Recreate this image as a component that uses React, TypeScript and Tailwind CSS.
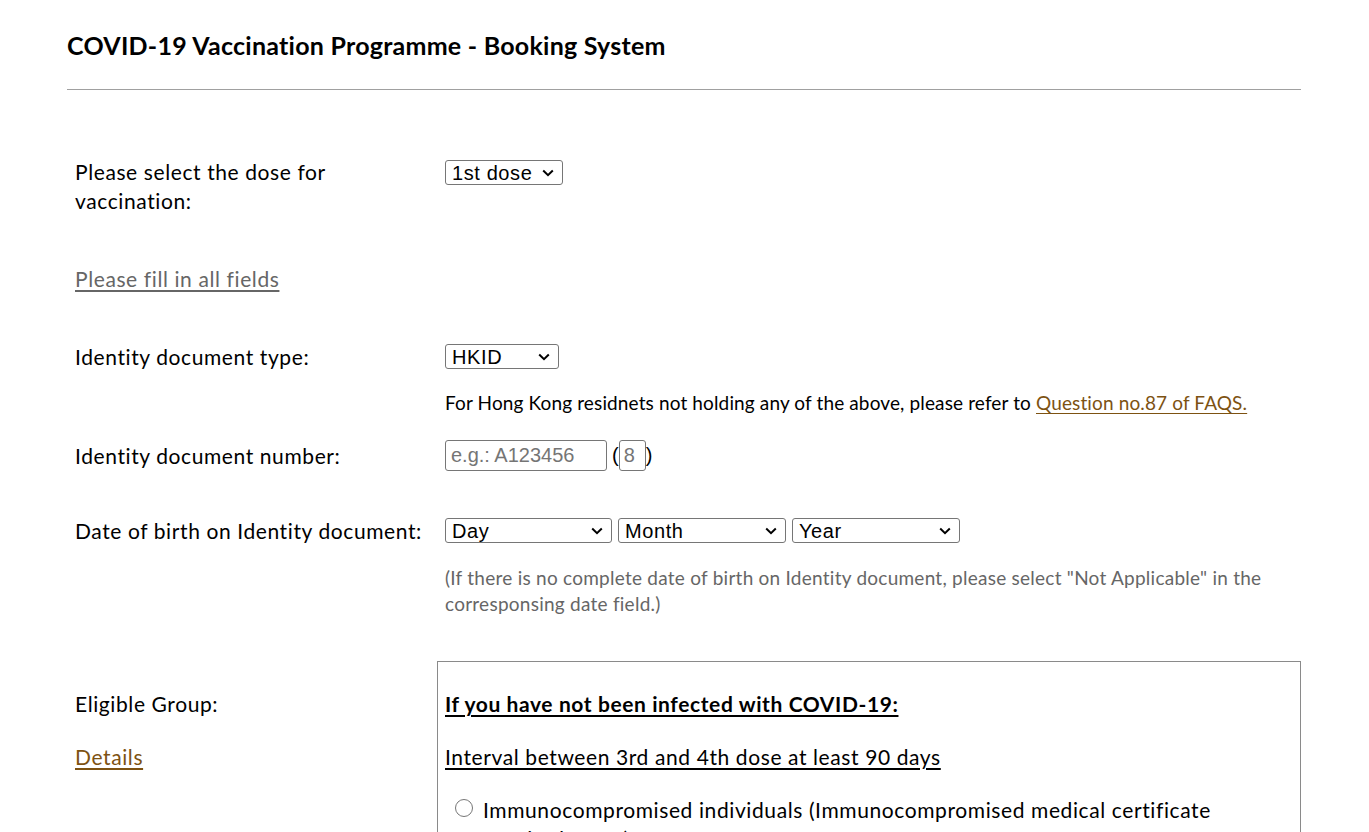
import React from "react";

const font = { fontFamily: '"Lato", "Noto Sans", sans-serif' };
const arial = { fontFamily: '"Liberation Sans", Arial, sans-serif' };

function Chevron() {
  return (
    <svg
      className="pointer-events-none absolute right-[9px] top-[9px]"
      width="12"
      height="8"
      viewBox="0 0 12 8"
      fill="none"
    >
      <path d="M1.2 1.5l4.8 4.6 4.8-4.6" stroke="#000" strokeWidth="2" />
    </svg>
  );
}

function Select({ value, width }: { value: string; width: string }) {
  return (
    <div className={`relative block h-[25px] shrink-0 ${width}`}>
      <select
        defaultValue={value}
        className="block h-[25px] w-full appearance-none rounded-[3px] border border-[#767676] bg-white pl-[6px] pr-6 pt-[1px] text-[20px] leading-[22px] text-black outline-none"
        style={arial}
      >
        <option>{value}</option>
      </select>
      <Chevron />
    </div>
  );
}

export default function App() {
  return (
    <div className="min-h-screen bg-white text-black" style={font}>
      <div className="mx-[67px] w-[1234px]">
        <h1 className="pt-[30px] text-[25px] font-bold leading-[30px] tracking-[0.25px]">
          COVID-19 Vaccination Programme - Booking System
        </h1>
        <div className="mt-[29px] h-px bg-[#a0a0a0]" />

        <div className="text-[21px] leading-[29px] tracking-[0.6px]">
          {/* Dose */}
          <div className="mt-[67px] grid grid-cols-[370px_1fr]">
            <div className="px-2">Please select the dose for vaccination:</div>
            <div className="flex items-start px-2 pt-[3px]">
              <Select value="1st dose" width="w-[118px]" />
            </div>
          </div>

          {/* Fill in all fields */}
          <div className="mt-[49px] px-2">
            <a href="#" className="text-[#666666] underline underline-offset-[3px]">
              Please fill in all fields
            </a>
          </div>

          {/* ID type */}
          <div className="mt-[49px] grid grid-cols-[370px_1fr]">
            <div className="px-2">Identity document type:</div>
            <div className="px-2 pt-[2px]">
              <Select value="HKID" width="w-[114px]" />
              <p className="mt-[21px] text-[19px] leading-[26px] tracking-[0.13px]">
                For Hong Kong residnets not holding any of the above, please refer to{" "}
                <a href="#" className="text-[#7d5212] underline underline-offset-[3px]">
                  Question no.87 of FAQS.
                </a>
              </p>
            </div>
          </div>

          {/* ID number */}
          <div className="mt-[24px] grid grid-cols-[370px_1fr]">
            <div className="px-2 pt-px">Identity document number:</div>
            <div className="flex items-center px-2 text-[20px] tracking-normal" style={arial}>
              <input
                placeholder="e.g.: A123456"
                className="h-[31px] w-[162px] rounded-[3px] border border-[#767676] px-[5px] text-[20px] placeholder:text-[#757575] outline-none"
              />
              <span className="ml-[5px]">(</span>
              <input
                placeholder="8"
                className="h-[31px] w-[27px] rounded-[3px] border border-[#767676] px-[4px] text-[20px] placeholder:text-[#757575] outline-none"
              />
              <span>)</span>
            </div>
          </div>

          {/* DOB */}
          <div className="mt-[45px] grid grid-cols-[370px_1fr]">
            <div className="px-2">Date of birth on Identity document:</div>
            <div className="px-2">
              <div className="flex items-start gap-[6px] pt-[2px]">
                <Select value="Day" width="w-[167px]" />
                <Select value="Month" width="w-[168px]" />
                <Select value="Year" width="w-[168px]" />
              </div>
              <p className="mt-[22px] text-[19px] leading-[26px] tracking-[0.25px] text-[#666666]">
                (If there is no complete date of birth on Identity document, please select "Not Applicable" in the
                corresponsing date field.)
              </p>
            </div>
          </div>

          {/* Eligible Group */}
          <div className="mt-[44px] grid grid-cols-[370px_1fr]">
            <div className="px-2 pt-[28px]">
              <div>Eligible Group:</div>
              <div className="mt-[24px]">
                <a href="#" className="text-[#7d5212] underline underline-offset-[3px]">
                  Details
                </a>
              </div>
            </div>
            <div className="border border-[#8a8a8a] pl-[7px] pr-6 pt-[27px] pb-6">
              <div className="font-bold underline underline-offset-[3px]">
                If you have not been infected with COVID-19:
              </div>
              <div className="mt-[24px] underline underline-offset-[3px]">
                Interval between 3rd and 4th dose at least 90 days
              </div>
              <label className="mt-[24px] flex items-start gap-[10px] pl-[10px]">
                <span className="mt-[4px] h-[18px] w-[18px] shrink-0 rounded-full border border-[#767676] bg-white" />
                <span>
                  Immunocompromised individuals (Immunocompromised medical certificate required proof)
                </span>
              </label>
              <label className="mt-[24px] flex items-start gap-[10px] pl-[10px]">
                <span className="mt-[4px] h-[18px] w-[18px] shrink-0 rounded-full border border-[#767676] bg-white" />
                <span>Persons aged 50 or above</span>
              </label>
            </div>
          </div>
        </div>
      </div>
    </div>
  );
}
